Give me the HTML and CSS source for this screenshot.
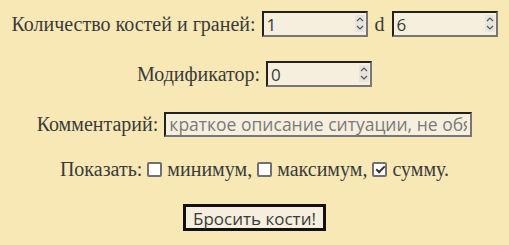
FILE: index.html
```html
<!DOCTYPE html>
<html lang="ru">
<head>
  <meta charset="UTF-8" />
  <title>Бросок костей</title>
  <link rel="stylesheet" href="styles.css">
</head>
<body>
  <form class="dice">
    <div class="row">
      <label for="count">Количество костей и граней:</label>
      <span class="field">
        <input type="number" id="count" value="1" class="num" />
        <span class="spin"><svg width="10" height="17" viewBox="0 0 10 17"><path d="M2 6 L5 3 L8 6 M2 11 L5 14 L8 11" fill="none" stroke="#555" stroke-width="1.2"/></svg></span>
      </span>
      <span class="d">d</span>
      <span class="field">
        <input type="number" id="sides" value="6" class="num" />
        <span class="spin"><svg width="10" height="17" viewBox="0 0 10 17"><path d="M2 6 L5 3 L8 6 M2 11 L5 14 L8 11" fill="none" stroke="#555" stroke-width="1.2"/></svg></span>
      </span>
    </div>
    <div class="row">
      <label for="mod">Модификатор:</label>
      <span class="field">
        <input type="number" id="mod" value="0" class="num" />
        <span class="spin"><svg width="10" height="17" viewBox="0 0 10 17"><path d="M2 6 L5 3 L8 6 M2 11 L5 14 L8 11" fill="none" stroke="#555" stroke-width="1.2"/></svg></span>
      </span>
    </div>
    <div class="row">
      <label for="comment">Комментарий:</label>
      <input type="text" id="comment" class="comment" placeholder="краткое описание ситуации, не обязательно" />
    </div>
    <div class="row show">
      Показать:
      <label><input type="checkbox" class="box" /> минимум,</label>
      <label><input type="checkbox" class="box" /> максимум,</label>
      <label><input type="checkbox" class="box" checked /> сумму.</label>
    </div>
    <div class="row last">
      <button type="button" class="roll">Бросить кости!</button>
    </div>
  </form>
</body>
</html>
```

FILE: styles.css
```css
body {
  margin: 0;
  background: #f8e8b5;
  font-family: "Liberation Serif", "Times New Roman", serif;
  font-size: 20px;
  color: #3a3a3a;
}

.dice {
  padding-top: 11px;
  display: flex;
  flex-direction: column;
  gap: 24px;
}

.row {
  display: flex;
  justify-content: center;
  align-items: center;
  gap: 6px;
  height: 26px;
}
.row.show {
  height: 18px;
  margin-top: -1px;
  gap: 5px;
}
.row.last {
  margin-top: 2px;
  height: 27px;
}

.field {
  position: relative;
  display: inline-flex;
}

input.num,
input.comment {
  box-sizing: border-box;
  height: 26px;
  margin: 0;
  padding: 0 3px;
  background: #f6efdd;
  font-family: "Open Sans", sans-serif;
  font-size: 17px;
  color: #3a3a3a;
  border: 2px solid;
  border-color: #222 #777 #777 #222;
  border-radius: 0;
  outline: none;
}
input.num {
  width: 106px;
  -moz-appearance: textfield;
}
input.num::-webkit-inner-spin-button,
input.num::-webkit-outer-spin-button {
  -webkit-appearance: none;
  margin: 0;
}
input.comment {
  width: 308px;
  height: 25px;
  font-size: 17.5px;
}
input.comment::placeholder {
  color: #7a7a7a;
}

.spin {
  position: absolute;
  right: 3px;
  top: 4px;
  width: 10px;
  height: 17px;
  background: #e6e4dc;
  display: flex;
}

.d {
  margin: 0 1px;
}

.show label {
  display: flex;
  align-items: center;
  gap: 5px;
}
.box {
  appearance: none;
  box-sizing: border-box;
  width: 15px;
  height: 15px;
  margin: 0;
  border: 2px solid #707070;
  border-radius: 2px;
  background: #fff;
  position: relative;
}
.box:checked::after {
  content: '';
  position: absolute;
  left: 3.5px;
  top: 0.5px;
  width: 3px;
  height: 7px;
  border: solid #333;
  border-width: 0 2px 2px 0;
  transform: rotate(45deg);
}

.roll {
  box-sizing: border-box;
  height: 27px;
  padding: 0 7px;
  background: #f6efdd;
  border: 3px solid #111;
  border-radius: 0;
  font-family: "Open Sans", sans-serif;
  font-size: 17px;
  color: #3a3a3a;
}
```
